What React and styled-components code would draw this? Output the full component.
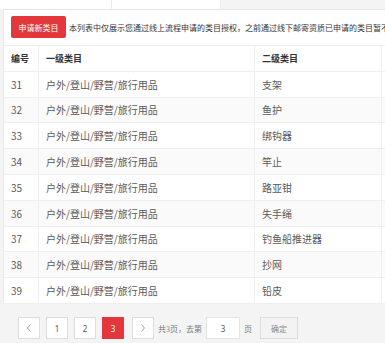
import React from "react";
import styled, { createGlobalStyle } from "styled-components";

const GlobalStyle = createGlobalStyle`
  html, body {
    margin: 0;
    padding: 0;
    background: #f4f4f4;
    overflow: hidden;
  }
  body {
    font-family: "Noto Sans CJK SC", "Noto Sans", sans-serif;
    color: #333;
  }
`;

const Page = styled.div`
  width: 385px;
  height: 343px;
  overflow: hidden;
  background: #f4f4f4;
`;

const TabBar = styled.div`
  display: flex;
  height: 9px;
`;

const Tab = styled.div`
  width: ${p => p.w}px;
  background: #fff;
  border-right: 1px solid #ececec;
`;

const Panel = styled.div`
  margin-left: 3px;
  background: #fff;
  border-top: 1px solid #e6e6e6;
  border-left: 1px solid #e9e9e9;
  width: 520px;
`;

const Toolbar = styled.div`
  display: flex;
  align-items: center;
  gap: 3px;
  padding: 6px 0 7px 7px;
  white-space: nowrap;
`;

const ApplyButton = styled.button`
  width: 55px;
  height: 22px;
  border: none;
  border-radius: 2px;
  background: #e2383b;
  color: #fff;
  font-family: inherit;
  font-size: 8px;
  padding: 0;
  flex-shrink: 0;
`;

const Notice = styled.span`
  font-size: 8px;
  color: #333;
`;

const Table = styled.div`
  display: flex;
  flex-direction: column;
`;

const Row = styled.div`
  display: grid;
  grid-template-columns: 34px 216px 127px 140px;
  height: 25.8px;
  box-sizing: border-box;
  border-top: 1px solid #efefef;
  background: ${p => (p.striped ? "#fafafa" : "#fff")};
`;

const Cell = styled.div`
  display: flex;
  align-items: center;
  padding-left: 7px;
  border-left: ${p => (p.first ? "none" : "1px solid #efefef")};
  font-size: ${p => (p.head ? 9 : 10)}px;
  font-weight: ${p => (p.head ? 700 : 400)};
  color: ${p => (p.head ? "#333" : "#5a5a5a")};
  white-space: nowrap;
  overflow: hidden;
`;

const Pager = styled.div`
  display: flex;
  align-items: center;
  gap: 4px;
  padding: 11px 0 0 18px;
  height: 39px;
  box-sizing: border-box;
  border-top: 1px solid #efefef;
  font-family: "Liberation Serif", "Noto Sans CJK SC", serif;
`;

const PageList = styled.div`
  display: flex;
  gap: 6px;
`;

const PageButton = styled.div`
  width: 22px;
  height: 22px;
  box-sizing: border-box;
  display: flex;
  align-items: center;
  justify-content: center;
  border: 1px solid ${p => (p.active ? "#e2383b" : "#dedede")};
  background: ${p => (p.active ? "#e2383b" : "#fff")};
  color: ${p => (p.active ? "#fff" : "#555")};
  font-family: "Noto Sans", sans-serif;
  font-size: 8px;
  margin-left: ${p => p.ml || 0}px;
`;

const PagerText = styled.span`
  font-size: 8px;
  color: #777;
  margin-right: ${p => p.mr || 0}px;
`;

const JumpInput = styled.div`
  width: 34px;
  height: 22px;
  box-sizing: border-box;
  background: #fff;
  border: 1px solid #e4e4e4;
  display: flex;
  align-items: center;
  justify-content: center;
  font-family: "Noto Sans", sans-serif;
  font-size: 8px;
  color: #555;
`;

const ConfirmButton = styled.div`
  width: 38px;
  height: 22px;
  box-sizing: border-box;
  border: 1px solid #dcdcdc;
  background: #f3f3f3;
  color: #888;
  font-size: 8px;
  display: flex;
  align-items: center;
  justify-content: center;
`;

const Chevron = ({ dir }) => (
  <svg width="8" height="10" viewBox="0 0 8 10" fill="none">
    <path
      d={dir === "left" ? "M5.5 1.5 L2.5 5 L5.5 8.5" : "M2.5 1.5 L5.5 5 L2.5 8.5"}
      stroke="#999"
      strokeWidth="0.9"
    />
  </svg>
);

const rows = [
  { id: 31, sub: "支架" },
  { id: 32, sub: "鱼护" },
  { id: 33, sub: "绑钩器" },
  { id: 34, sub: "竿止" },
  { id: 35, sub: "路亚钳" },
  { id: 36, sub: "失手绳" },
  { id: 37, sub: "钓鱼船推进器" },
  { id: 38, sub: "抄网" },
  { id: 39, sub: "铅皮" },
];

export default function App() {
  return (
    <Page>
      <GlobalStyle />
      <TabBar>
        <Tab w={111} />
        <Tab w={108} />
      </TabBar>
      <Panel>
        <Toolbar>
          <ApplyButton>申请新类目</ApplyButton>
          <Notice>
            本列表中仅展示您通过线上流程申请的类目授权，之前通过线下邮寄资质已申请的类目暂不展示
          </Notice>
        </Toolbar>
        <Table>
          <Row>
            <Cell first head>编号</Cell>
            <Cell head>一级类目</Cell>
            <Cell head>二级类目</Cell>
            <Cell head />
          </Row>
          {rows.map((r, i) => (
            <Row key={r.id} striped={i % 2 === 1}>
              <Cell first>{r.id}</Cell>
              <Cell>户外/登山/野营/旅行用品</Cell>
              <Cell>{r.sub}</Cell>
              <Cell />
            </Row>
          ))}
        </Table>
      </Panel>
      <Pager>
        <PageList>
          <PageButton><Chevron dir="left" /></PageButton>
          <PageButton>1</PageButton>
          <PageButton>2</PageButton>
          <PageButton active>3</PageButton>
          <PageButton ml={2}><Chevron dir="right" /></PageButton>
        </PageList>
        <PagerText>共3页，去第</PagerText>
        <JumpInput>3</JumpInput>
        <PagerText mr={4}>页</PagerText>
        <ConfirmButton>确定</ConfirmButton>
      </Pager>
    </Page>
  );
}
